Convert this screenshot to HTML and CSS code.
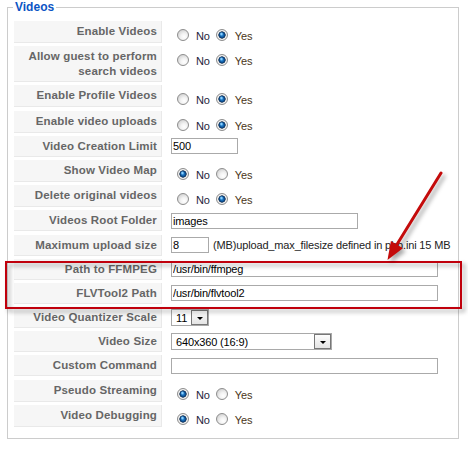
FILE: index.html
```html
<!DOCTYPE html>
<html>
<head>
<meta charset="utf-8">
<title>Videos</title>
<link rel="stylesheet" href="styles.css">
</head>
<body>
<fieldset class="panel">
  <legend>Videos</legend>
  <div class="form">
    <div class="key">Enable Videos</div>
    <div class="val radios"><input type="radio" name="r1" class="rad"><label class="no">No</label><input type="radio" name="r1" class="rad" checked><label class="yes">Yes</label></div>

    <div class="key">Allow guest to perform search videos</div>
    <div class="val radios"><input type="radio" name="r2" class="rad"><label class="no">No</label><input type="radio" name="r2" class="rad" checked><label class="yes">Yes</label></div>

    <div class="key">Enable Profile Videos</div>
    <div class="val radios"><input type="radio" name="r3" class="rad"><label class="no">No</label><input type="radio" name="r3" class="rad" checked><label class="yes">Yes</label></div>

    <div class="key">Enable video uploads</div>
    <div class="val radios"><input type="radio" name="r4" class="rad"><label class="no">No</label><input type="radio" name="r4" class="rad" checked><label class="yes">Yes</label></div>

    <div class="key">Video Creation Limit</div>
    <div class="val field"><input type="text" class="tin w-limit" value="500"></div>

    <div class="key">Show Video Map</div>
    <div class="val radios"><input type="radio" name="r6" class="rad" checked><label class="no">No</label><input type="radio" name="r6" class="rad"><label class="yes">Yes</label></div>

    <div class="key">Delete original videos</div>
    <div class="val radios"><input type="radio" name="r7" class="rad"><label class="no">No</label><input type="radio" name="r7" class="rad" checked><label class="yes">Yes</label></div>

    <div class="key">Videos Root Folder</div>
    <div class="val field"><input type="text" class="tin w-folder" value="images"></div>

    <div class="key">Maximum upload size</div>
    <div class="val field"><input type="text" class="tin w-small" value="8"><span class="note">(MB)upload_max_filesize defined in php.ini 15 MB</span></div>

    <div class="key">Path to FFMPEG</div>
    <div class="val field"><input type="text" class="tin w-long" value="/usr/bin/ffmpeg"></div>

    <div class="key">FLVTool2 Path</div>
    <div class="val field"><input type="text" class="tin w-long" value="/usr/bin/flvtool2"></div>

    <div class="key">Video Quantizer Scale</div>
    <div class="val field"><div class="select w-small"><span class="stxt">11</span><span class="sbtn"><span class="tri"></span></span></div></div>

    <div class="key">Video Size</div>
    <div class="val field"><div class="select w-size"><span class="stxt">640x360 (16:9)</span><span class="sbtn"><span class="tri"></span></span></div></div>

    <div class="key">Custom Command</div>
    <div class="val field"><input type="text" class="tin w-long" value=""></div>

    <div class="key">Pseudo Streaming</div>
    <div class="val radios"><input type="radio" name="r15" class="rad" checked><label class="no">No</label><input type="radio" name="r15" class="rad"><label class="yes">Yes</label></div>

    <div class="key">Video Debugging</div>
    <div class="val radios"><input type="radio" name="r16" class="rad" checked><label class="no">No</label><input type="radio" name="r16" class="rad"><label class="yes">Yes</label></div>
  </div>
</fieldset>

<div class="highlight"></div>

<svg class="arrow" width="468" height="449" viewBox="0 0 468 449">
  <line x1="441" y1="173" x2="396" y2="246" stroke="#c40b0b" stroke-width="3" stroke-linecap="round"/>
  <polygon points="387.5,260 402.9,248.2 390.9,241" fill="#c40b0b"/>
</svg>
</body>
</html>
```

FILE: styles.css
```css
html, body {
  margin: 0;
  padding: 0;
  background: #fff;
}

body {
  position: relative;
  width: 468px;
  height: 449px;
  overflow: hidden;
  font-family: "Liberation Sans", Arial, sans-serif;
}

.panel {
  margin: 0 0 0 7px;
  width: 452px;
  box-sizing: border-box;
  border: 1px solid #cccccc;
  padding: 7px 6px 11px 6px;
  background: #fff;
  min-width: 0;
}

.panel legend {
  font-size: 12px;
  font-weight: bold;
  color: #0b55c4;
  line-height: 14px;
  padding: 0 2px;
  margin-left: -1px;
}

.form {
  display: grid;
  grid-template-columns: 148px 1fr;
  column-gap: 4px;
  row-gap: 3.2px;
}

.key {
  box-sizing: border-box;
  background: #f6f6f6;
  border-bottom: 1px solid #e9e9e9;
  border-right: 1px solid #e9e9e9;
  color: #666666;
  font-weight: bold;
  font-size: 11.5px;
  letter-spacing: 0.15px;
  line-height: 15px;
  text-align: right;
  padding: 3px 4px 2px 6px;
  min-height: 21px;
}

.val {
  box-sizing: border-box;
  padding-left: 5px;
  font-size: 11px;
  letter-spacing: -0.15px;
  color: #222;
}

.radios {
  display: flex;
  align-items: flex-start;
  min-height: 22px;
  padding-top: 8px;
}

.field {
  display: flex;
  align-items: center;
}

.rad {
  -webkit-appearance: none;
  appearance: none;
  box-sizing: border-box;
  width: 12px;
  height: 12px;
  margin: 0 7px 0 6px;
  border-radius: 50%;
  border: 1px solid #8d8d8d;
  background: radial-gradient(circle at 62% 68%, #ffffff 0%, #f3f3f3 35%, #d2d2d2 80%, #c4c4c4 100%);
  flex: none;
}

.rad:checked {
  background:
    radial-gradient(circle at 44% 40%, #bfeaff 0, rgba(120, 200, 255, 0.9) 0.8px, rgba(40, 130, 210, 0) 2px),
    radial-gradient(circle at 50% 50%, #2b8ad6 0, #1668b2 1.6px, #0a3c73 3px, #2c4460 3.4px, #eeeeee 3.9px, #f4f4f4 4.4px, #d0d0d0 6px);
}

.no,
.yes {
  line-height: 14px;
}

.no {
  color: #24243a;
}

.yes {
  color: #4a3518;
}

.tin {
  box-sizing: border-box;
  height: 16px;
  margin: 0;
  padding: 0 1px;
  border: 1px solid #aaaaaa;
  background: #fff;
  color: #000;
  font-family: "Liberation Sans", Arial, sans-serif;
  font-size: 11px;
  letter-spacing: -0.15px;
  outline: none;
}

.w-limit { width: 67px; }
.w-folder { width: 187px; }
.w-small { width: 38px; }
.w-long { width: 267px; }
.w-size { width: 161px; }

.note {
  margin-left: 4px;
  white-space: nowrap;
  color: #222;
}

.select {
  box-sizing: border-box;
  height: 17px;
  display: flex;
  align-items: center;
  border: 1px solid #a9a9a9;
  background: #fff;
  color: #000;
  padding-left: 4px;
}

.stxt {
  flex: 1;
  white-space: nowrap;
}

.sbtn {
  box-sizing: border-box;
  width: 17px;
  height: 15px;
  border: 1px solid #777777;
  background: linear-gradient(#fdfdfd, #e4e4e4);
  display: flex;
  align-items: flex-end;
  justify-content: center;
  padding-bottom: 4px;
  flex: none;
}

.tri {
  width: 0;
  height: 0;
  border-left: 3.5px solid transparent;
  border-right: 3.5px solid transparent;
  border-top: 3.5px solid #000;
}

.highlight {
  position: absolute;
  left: 5px;
  top: 261px;
  width: 457px;
  height: 48px;
  box-sizing: border-box;
  border: 2px solid #c0000c;
  filter: drop-shadow(3px 3px 2px rgba(0, 0, 0, 0.35));
}

.arrow {
  position: absolute;
  left: 0;
  top: 0;
  pointer-events: none;
  filter: drop-shadow(3px 3px 2px rgba(0, 0, 0, 0.35));
}
```
